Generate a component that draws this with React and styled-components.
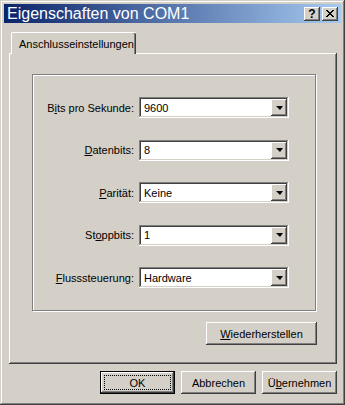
import styled, { createGlobalStyle } from 'styled-components';

const Global = createGlobalStyle`
  html, body { margin: 0; padding: 0; background: #d4d0c8; }
  body {
    font-family: "Liberation Sans", Arial, sans-serif;
    font-size: 11px;
    color: #000;
  }
  * { box-sizing: border-box; }
`;

const raised = `
  box-shadow:
    inset -1px -1px #404040,
    inset 1px 1px #ffffff,
    inset -2px -2px #808080,
    inset 2px 2px #d4d0c8;
`;

const sunken = `
  box-shadow:
    inset -1px -1px #ffffff,
    inset 1px 1px #808080,
    inset -2px -2px #d4d0c8,
    inset 2px 2px #404040;
`;

const Window = styled.div`
  width: 345px;
  height: 405px;
  padding: 4px;
  background: #d4d0c8;
  display: flex;
  flex-direction: column;
  box-shadow:
    inset -1px -1px #404040,
    inset 1px 1px #d4d0c8,
    inset -2px -2px #808080,
    inset 2px 2px #ffffff;
`;

const TitleBar = styled.div`
  height: 19px;
  display: flex;
  align-items: center;
  padding: 0 3px 0 3px;
  background: linear-gradient(to right, #0a246a, #a6caf0);
  color: #fff;
  font-size: 16px;
  line-height: 19px;
`;

const TitleText = styled.span`
  flex: 1;
  white-space: nowrap;
`;

const TitleButtons = styled.div`
  display: flex;
  gap: 2px;
`;

const CaptionButton = styled.button`
  width: 16px;
  height: 14px;
  padding: 0;
  border: 0;
  background: #d4d0c8;
  ${raised}
  display: flex;
  align-items: center;
  justify-content: center;
  font-family: "Liberation Sans", Arial, sans-serif;
  font-weight: bold;
  font-size: 12px;
  line-height: 1;
  color: #000;
`;

const Body = styled.div`
  padding: 9px 0 0 5px;
  display: flex;
  flex-direction: column;
`;

const TabStrip = styled.div`
  display: flex;
  padding-left: 2px;
  position: relative;
  z-index: 1;
  margin-bottom: -1px;
`;

const Tab = styled.div`
  width: 125px;
  height: 22px;
  padding: 5px 0 0 7px;
  background: #d4d0c8;
  border-top: 1px solid #fff;
  border-left: 1px solid #fff;
  border-top-left-radius: 2px;
  border-top-right-radius: 2px;
  box-shadow: inset -1px 0 #404040, inset -2px 0 #808080;
  white-space: nowrap;
`;

const Panel = styled.div`
  width: 328px;
  height: 311px;
  padding: 21px 20px 0 23px;
  box-shadow:
    inset -1px -1px #404040,
    inset 1px 1px #ffffff,
    inset -2px -2px #808080;
  display: flex;
  flex-direction: column;
`;

const GroupBox = styled.div`
  width: 284px;
  height: 237px;
  border: 1px solid #808080;
  box-shadow: inset 1px 1px #fff, 1px 1px #fff;
  padding-top: 22px;
  display: grid;
  grid-template-columns: 101px 150px;
  grid-auto-rows: 21px;
  column-gap: 5px;
  row-gap: 21.5px;
  align-content: start;
`;

const Label = styled.label`
  text-align: right;
  align-self: center;
  white-space: nowrap;
`;

const Combo = styled.div`
  height: 21px;
  background: #fff;
  ${sunken}
  display: flex;
  align-items: center;
  padding: 2px 2px 2px 5px;
`;

const ComboText = styled.span`
  flex: 1;
`;

const DropButton = styled.div`
  width: 16px;
  height: 17px;
  background: #d4d0c8;
  ${raised}
  display: flex;
  align-items: center;
  justify-content: center;
`;

const Arrow = styled.div`
  width: 0;
  height: 0;
  border-left: 4px solid transparent;
  border-right: 3px solid transparent;
  border-top: 4px solid #000;
  margin-left: 1px;
`;

const PanelFooter = styled.div`
  display: flex;
  justify-content: flex-end;
  width: 285px;
  margin-top: 11px;
`;

const Button = styled.button`
  width: ${(p) => p.$w || 75}px;
  height: 23px;
  padding: 0;
  border: 0;
  background: #d4d0c8;
  font-family: "Liberation Sans", Arial, sans-serif;
  font-size: 11px;
  color: #000;
  position: relative;
  ${(p) =>
    p.$default
      ? `box-shadow:
    inset 0 0 0 1px #000,
    inset -2px -2px #404040,
    inset 2px 2px #ffffff,
    inset -3px -3px #808080;`
      : raised}
`;

const Focus = styled.span`
  position: absolute;
  inset: 4px;
  border: 1px dotted #000;
  display: flex;
  align-items: center;
  justify-content: center;
`;

const ButtonRow = styled.div`
  display: flex;
  justify-content: flex-end;
  gap: 6px;
  width: 328px;
  margin-top: 7px;
`;

const rows = [
  [<>B<u>i</u>ts pro Sekunde:</>, '9600'],
  [<><u>D</u>atenbits:</>, '8'],
  [<><u>P</u>arität:</>, 'Keine'],
  [<>St<u>o</u>ppbits:</>, '1'],
  [<><u>F</u>lusssteuerung:</>, 'Hardware'],
];

export default function App() {
  return (
    <>
      <Global />
      <Window>
        <TitleBar>
          <TitleText>Eigenschaften von COM1</TitleText>
          <TitleButtons>
            <CaptionButton>?</CaptionButton>
            <CaptionButton>
              <svg width="8" height="7" viewBox="0 0 8 7" shapeRendering="crispEdges">
                <path d="M0 0h2v1h-2zM6 0h2v1h-2zM1 1h2v1h-2zM5 1h2v1h-2zM2 2h4v1h-4zM3 3h2v1h-2zM2 4h4v1h-4zM1 5h2v1h-2zM5 5h2v1h-2zM0 6h2v1h-2zM6 6h2v1h-2z" fill="#000" />
              </svg>
            </CaptionButton>
          </TitleButtons>
        </TitleBar>
        <Body>
          <TabStrip>
            <Tab>Anschlusseinstellungen</Tab>
          </TabStrip>
          <Panel>
            <GroupBox>
              {rows.map(([label, value], i) => (
                <Row key={i} label={label} value={value} />
              ))}
            </GroupBox>
            <PanelFooter>
              <Button $w={111}><u>W</u>iederherstellen</Button>
            </PanelFooter>
          </Panel>
          <ButtonRow>
            <Button $default>
              <Focus>OK</Focus>
            </Button>
            <Button>Abbrechen</Button>
            <Button>Ü<u>b</u>ernehmen</Button>
          </ButtonRow>
        </Body>
      </Window>
    </>
  );
}

function Row({ label, value }) {
  return (
    <>
      <Label>{label}</Label>
      <Combo>
        <ComboText>{value}</ComboText>
        <DropButton>
          <Arrow />
        </DropButton>
      </Combo>
    </>
  );
}
